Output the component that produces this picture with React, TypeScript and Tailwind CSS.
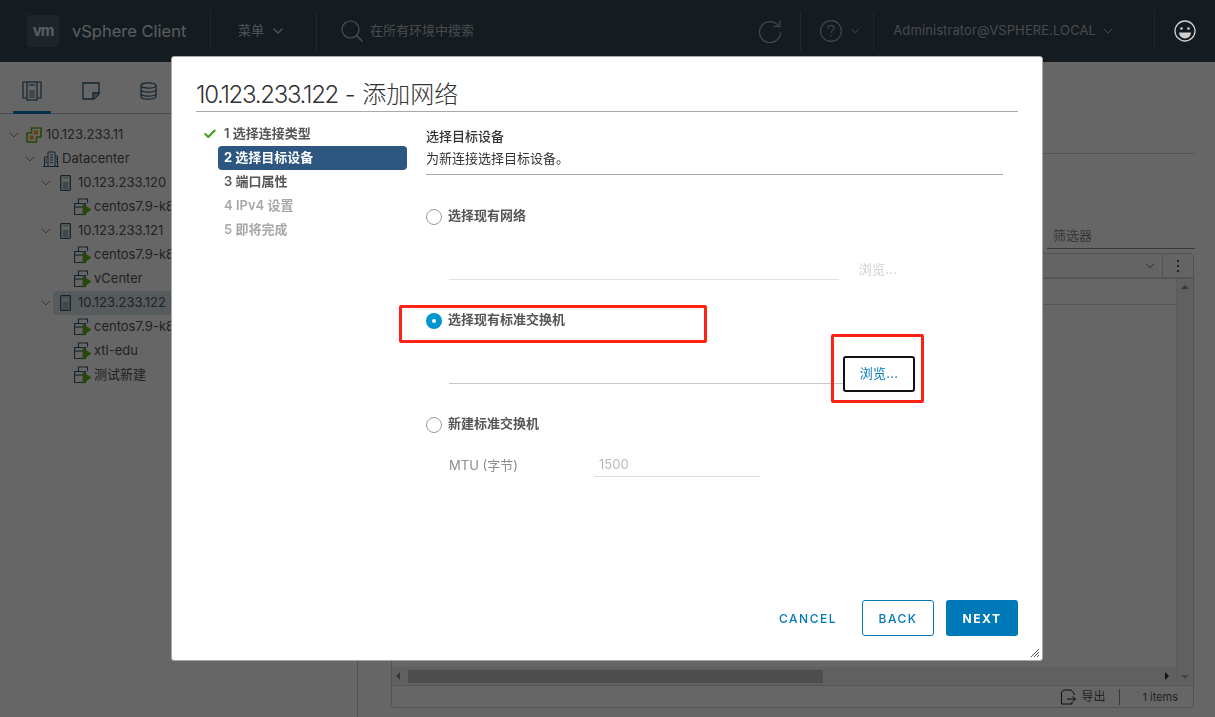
import { ChevronDown, Check } from 'lucide-react';

const cjk = '"Inter", "Noto Sans CJK SC", sans-serif';

const treeRows = [
  { label: '10.123.233.11', depth: 0, icon: 'cluster' },
  { label: 'Datacenter', depth: 1, icon: 'dc' },
  { label: '10.123.233.120', depth: 2, icon: 'host' },
  { label: 'centos7.9-k8s-master', depth: 3, icon: 'vm' },
  { label: '10.123.233.121', depth: 2, icon: 'host' },
  { label: 'centos7.9-k8s-node1', depth: 3, icon: 'vm' },
  { label: 'vCenter', depth: 3, icon: 'vm' },
  { label: '10.123.233.122', depth: 2, icon: 'host', selected: true },
  { label: 'centos7.9-k8s-node2', depth: 3, icon: 'vm' },
  { label: 'xtl-edu', depth: 3, icon: 'vm' },
  { label: '测试新建', depth: 3, icon: 'vm' },
];

function TreeIcon({ type }: { type: string }) {
  if (type === 'cluster') {
    return (
      <svg width="16" height="16" viewBox="0 0 16 16" fill="none">
        <path d="M5.500 1h9.500v9h-4.500v5H1V6h4.500z" stroke="#6fae1e" strokeWidth="1.600" />
        <rect x="8" y="3.500" width="4" height="4" fill="#f0a81c" />
        <rect x="3.500" y="8.500" width="4" height="4" fill="#f0a81c" />
      </svg>
    );
  }
  if (type === 'dc') {
    return (
      <svg width="16" height="16" viewBox="0 0 16 16" fill="none" stroke="#315a75" strokeWidth="1">
        <path d="M0 15.500h16M1.500 15.500V6H5M5 15.500V1h7v14.500M12 5h2.500v10.500" />
        <path d="M7 4h3M7 6.500h3M7 9h3M7 11.500h3M2.500 9h1.500M2.500 11.500h1.500M13 8h1M13 11h1" />
      </svg>
    );
  }
  if (type === 'host') {
    return (
      <svg width="11" height="16" viewBox="0 0 11 16" fill="none">
        <rect x="0.700" y="0.700" width="9.600" height="14.600" rx="0.500" stroke="#315a75" strokeWidth="1.300" />
        <rect x="2.500" y="6.500" width="6" height="7.500" fill="#a9b4ba" />
        <path d="M2.500 3h6" stroke="#a9b4ba" strokeWidth="1.200" />
      </svg>
    );
  }
  return (
    <svg width="18" height="18" viewBox="0 0 18 18" fill="none">
      <path d="M4.500 5V1h9v4" stroke="#315a75" strokeWidth="1.100" />
      <path d="M.500 5.500h11v11H.500z" stroke="#315a75" strokeWidth="1.100" />
      <path d="M.500 9h11" stroke="#315a75" strokeWidth="1.100" />
      <path d="M8.500 5.500l9 6-9 6.500z" fill="#6db01f" />
    </svg>
  );
}

function Radio({ checked }: { checked?: boolean }) {
  return checked ? (
    <span className="w-4 h-4 rounded-full bg-[#0095d3] flex items-center justify-center shrink-0">
      <span className="w-1 h-1 rounded-full bg-white" />
    </span>
  ) : (
    <span className="w-4 h-4 rounded-full border border-[#9a9a9a] bg-white shrink-0" />
  );
}

function Header() {
  return (
    <header className="h-[62px] bg-[#324655] flex items-center text-[#b9b9b9] shrink-0">
      <div className="w-8 h-8 ml-[27px] rounded-[3px] bg-[#4a5c6a] flex items-center justify-center font-bold text-[15px] tracking-[-1px] text-[#e6e6e6]">vm</div>
      <span className="ml-[13px] text-[16.500px] w-[138px] text-[#e6e6e6]">vSphere Client</span>
      <div className="w-px h-10 bg-[#4e6272]" />
      <span className="ml-[27px] text-[13px] flex items-center gap-[6px] text-[#d0d0d0]">
        菜单 <ChevronDown size={16} strokeWidth={2} />
      </span>
      <div className="ml-[30px] w-px h-10 bg-[#4e6272]" />
      <svg className="ml-6" width="22" height="22" viewBox="0 0 22 22" fill="none" stroke="#c9c9c9" strokeWidth="1.200">
        <circle cx="9.500" cy="9.500" r="8.500" />
        <path d="M15.500 15.500l6 6" />
      </svg>
      <span className="ml-[7px] text-[13px]">在所有环境中搜索</span>
      <div className="flex-1" />
      <svg width="24" height="24" viewBox="0 0 24 24" fill="none" stroke="#b0b0b0" strokeWidth="1.200">
        <path d="M20.500 7A10.500 10.500 0 1 0 22.500 13" />
        <path d="M22 1.500V7.500h-6.500" />
      </svg>
      <div className="ml-[18px] w-px h-10 bg-[#4e6272]" />
      <svg className="ml-[19px]" width="22" height="22" viewBox="0 0 22 22" fill="none" stroke="#b0b0b0" strokeWidth="1.100">
        <circle cx="11" cy="11" r="10.400" />
        <path d="M8 8.500c0-4 6-4 6-.500 0 2-3 2.500-3 5M11 15v1.500" />
      </svg>
      <ChevronDown className="ml-[6px]" size={14} strokeWidth={1.500} />
      <div className="ml-[11px] w-px h-10 bg-[#4e6272]" />
      <span className="ml-[19px] text-[13px] tracking-[0.100px]">Administrator@VSPHERE.LOCAL</span>
      <ChevronDown className="ml-1" size={16} strokeWidth={1.500} />
      <div className="ml-[38px] w-px h-10 bg-[#4e6272]" />
      <svg className="ml-[19px] mr-[19px] relative z-10" width="22" height="22" viewBox="0 0 22 22" fill="none" stroke="#cfcfcf" strokeWidth="1.300">
        <circle cx="11" cy="11" r="10" />
        <circle cx="7.500" cy="8.500" r="1.300" fill="#cfcfcf" stroke="none" />
        <circle cx="14.500" cy="8.500" r="1.300" fill="#cfcfcf" stroke="none" />
        <path d="M5 12.500h12a6 6 0 0 1-12 0z" fill="#cfcfcf" stroke="none" />
      </svg>
    </header>
  );
}

function Sidebar() {
  return (
    <aside className="w-[358px] shrink-0 border-r border-[#d0d0d0] bg-white overflow-hidden">
      <div className="h-[52px] border-b border-[#c0c0c0] flex items-end pl-[13px]">
        <div className="w-[38px] h-[52px] pt-2 border-b-[3px] border-[#0079b8] -mb-px flex items-center justify-center">
          <svg width="20" height="20" viewBox="0 0 20 20" fill="none" stroke="#315a75" strokeWidth="1.200">
            <path d="M4.500 1H1v16h3.500M15.500 1H19v16h-3.500" />
            <rect x="5" y="1" width="10" height="18" />
            <rect x="7" y="9" width="6" height="8" fill="#a9b4ba" stroke="none" />
            <path d="M7 4h6" />
          </svg>
        </div>
        <div className="w-[40px] ml-[20px] h-[52px] pt-2 flex items-center justify-center">
          <svg width="18" height="18" viewBox="0 0 18 18" fill="none" stroke="#315a75" strokeWidth="1.300">
            <path d="M1 1h16v11l-5 5H1z" />
            <path d="M17 11h-6v6" fill="#a9b4ba" />
          </svg>
        </div>
        <div className="w-[40px] ml-[17px] h-[52px] pt-2 flex items-center justify-center">
          <svg width="17" height="18" viewBox="0 0 17 18" fill="none" stroke="#315a75" strokeWidth="1.200">
            <ellipse cx="8.500" cy="3.500" rx="7.500" ry="2.700" />
            <path d="M1 3.500v11c0 3.500 15 3.500 15 0v-11M1 7.500c0 3.500 15 3.500 15 0M1 11.500c0 3.500 15 3.500 15 0" />
          </svg>
        </div>
      </div>
      <div className="pt-[9px]">
        {treeRows.map((row) => (
          <div key={row.label} className="h-6 flex items-center whitespace-nowrap">
            {row.depth === 3 ? (
              <div className="w-[74px] shrink-0" />
            ) : (
              <div
                className={
                  row.depth === 0 ? 'w-[26px] pl-[6px] shrink-0' : row.depth === 1 ? 'w-[43px] pl-[22px] shrink-0' : 'w-[53px] pl-[38px] shrink-0'
                }
              >
                <ChevronDown size={16} strokeWidth={1.500} className="text-[#8c8c8c]" />
              </div>
            )}
            <div className={row.selected ? 'flex items-center h-6 flex-1 bg-[#d8e3e9] rounded-l-[3px] pl-[7px]' : row.depth === 2 ? 'flex items-center pl-[7px]' : 'flex items-center'}>
              <TreeIcon type={row.icon} />
              <span className={row.depth === 0 ? 'ml-[4px] text-[13px] text-[#565656]' : row.depth === 1 ? 'ml-[3px] text-[13px] text-[#565656]' : row.depth === 2 ? 'ml-[7px] text-[13px] text-[#565656]' : 'ml-[2px] text-[13px] text-[#565656]'}>
                {row.label}
              </span>
            </div>
          </div>
        ))}
      </div>
    </aside>
  );
}

function MainPanel() {
  return (
    <main className="flex-1 bg-white flex flex-col pl-[33px] pr-[20px] min-w-0">
      <div className="h-[92px] border-b border-[#d0d0d0] shrink-0" />
      <div className="h-[95px] shrink-0 flex justify-end items-end">
        <div className="w-[148px] h-[28px] border-b border-[#8c8c8c] text-[13px] text-[#8c8c8c] pl-[6px] pt-[5px]">筛选器</div>
      </div>
      <div className="flex-1 mb-[9px] mt-[4px] mr-px border border-[#d0d0d0] rounded-[3px] flex flex-col min-h-0">
        <div className="h-[25px] bg-[#fafafa] border-b-2 border-[#d4d4d4] flex justify-end items-center shrink-0">
          <ChevronDown size={14} strokeWidth={1.500} className="text-[#565656] mr-[5px]" />
          <div className="w-[31px] h-full border-l border-[#d0d0d0] flex items-center justify-center">
            <svg width="4" height="14" viewBox="0 0 4 14" fill="#565656">
              <rect x="1" y="1" width="2" height="2" />
              <rect x="1" y="6" width="2" height="2" />
              <rect x="1" y="11" width="2" height="2" />
            </svg>
          </div>
        </div>
        <div className="flex-1 flex min-h-0">
          <div className="flex-1 flex flex-col min-w-0">
            <div className="h-[26px] border-b border-[#d4d4d4] shrink-0" />
            <div className="flex-1" />
            <div className="h-[18px] bg-[#f0f0f0] flex items-center shrink-0 pl-[4px]">
              <span className="w-0 h-0 border-y-[4px] border-y-transparent border-r-[4px] border-r-[#8c8c8c]" />
              <div className="ml-[8px] h-[13px] w-[415px] bg-[#c4c4c4]" />
              <div className="flex-1" />
              <span className="w-0 h-0 border-y-[4px] border-y-transparent border-l-[4px] border-l-[#333] mr-[7px]" />
            </div>
          </div>
          <div className="w-[17px] bg-[#f0f0f0] border-l border-[#e4e4e4] shrink-0 flex flex-col items-center justify-between py-[6px]">
            <span className="w-0 h-0 border-x-[4px] border-x-transparent border-b-[4px] border-b-[#8c8c8c]" />
            <span className="w-0 h-0 border-x-[4px] border-x-transparent border-t-[4px] border-t-[#a8a8a8]" />
          </div>
        </div>
        <div className="h-[22px] pt-px border-t border-[#d4d4d4] flex items-center justify-end text-[11px] text-[#565656] shrink-0">
          <svg width="16" height="16" viewBox="0 0 16 16" fill="none" stroke="#222" strokeWidth="1">
            <path d="M14 6V4l-3-3H4L1.500 3v12H12v-2" />
            <path d="M7 10h8.500M12.500 7.500l3 2.500-3 2.500" />
          </svg>
          <span className="ml-[5px] text-[12px]">导出</span>
          <div className="w-px h-[16px] bg-[#8c8c8c] ml-[14px] mr-[22px]" />
          <span className="mr-[15px]">1 items</span>
        </div>
      </div>
    </main>
  );
}

function WizardDialog() {
  return (
    <div className="fixed inset-0 bg-black/60">
      <div className="absolute left-[171px] top-[56px] w-[872px] h-[605px] bg-white rounded-[3px] border border-[#a8a8a8] flex flex-col text-[#333]">
        <div className="mx-[24px] h-[55px] border-b border-[#a8a8a8] shrink-0 flex items-end text-[24px] leading-[32px] text-[#333] font-light">
          <span className="whitespace-pre">
            <span className="tracking-[-1.300px]">10.123.233.122</span> - 添加网络
          </span>
        </div>
        <div className="flex flex-1 min-h-0">
          <nav className="w-[254px] shrink-0 pl-[31px] pt-[10px] text-[13px] font-semibold">
            <div className="h-6 flex items-center text-[#565656]">
              <Check size={14} strokeWidth={3.500} className="text-[#3c9e1c] shrink-0" />
              <span className="ml-[7px]">1 选择连接类型</span>
            </div>
            <div className="h-6 flex items-center ml-[15px] w-[189px] bg-[#2d5680] rounded-[4px] text-white pl-[6px] font-bold">2 选择目标设备</div>
            <div className="h-6 flex items-center ml-[15px] pl-[6px] text-[#565656]">3 端口属性</div>
            <div className="h-6 flex items-center ml-[15px] pl-[6px] text-[#a8a8a8]">4 IPv4 设置</div>
            <div className="h-6 flex items-center ml-[15px] pl-[6px] text-[#a8a8a8]">5 即将完成</div>
          </nav>
          <section className="flex-1 pr-[39px] text-[13px] min-w-0">
            <div className="pt-[14px] h-[63px] border-b border-[#a8a8a8]">
              <div className="h-[22px] leading-[20px] font-medium text-[#333]">选择目标设备</div>
              <div className="h-[20px] leading-[20px] text-[#333]">为新连接选择目标设备。</div>
            </div>
            <div className="mt-[32px] h-5 flex items-center gap-[6px] font-semibold text-[#565656]">
              <Radio />
              <span className="pb-[2px]">选择现有网络</span>
            </div>
            <div className="mt-[23px] ml-[23px] flex items-end">
              <div className="w-[390px] h-[30px] border-b border-[#e0e0e0]" />
              <div className="w-[80px] h-9 -ml-px -mb-[8px] flex items-center justify-center text-[#cfcfcf] tracking-[0.300px]">浏览...</div>
            </div>
            <div className="relative mt-[31px] h-5 flex items-center gap-[6px] font-semibold text-[#565656]">
              <Radio checked />
              <span className="pb-[2px]">选择现有标准交换机</span>
              <div className="absolute left-[-27px] top-[-6px] w-[308px] h-[38px] border-[3px] border-[#fe2114] rounded-[2px]" />
            </div>
            <div className="relative mt-[25px] ml-[23px] flex items-end">
              <div className="w-[394px] h-[28px] border-b border-[#c8c8c8]" />
              <div className="w-[72px] h-9 -mb-[8px] flex items-center justify-center text-[#0079b8] border-2 border-[#111] rounded-[3px] tracking-[0.300px]">浏览...</div>
              <div className="absolute left-[382px] top-[-22px] w-[93px] h-[69px] border-[3px] border-[#fe2114] rounded-[2px]" />
            </div>
            <div className="mt-[31px] h-5 flex items-center gap-[6px] font-semibold text-[#565656]">
              <Radio />
              <span className="pb-[2px]">新建标准交换机</span>
            </div>
            <div className="mt-[18px] ml-[23px] flex items-end text-[#8c8c8c]">
              <span className="w-[145px] h-6 pt-px flex items-center">MTU (字节)</span>
              <span className="w-[166px] h-6 pt-px flex items-center border-b border-[#e0e0e0] text-[#b8b8b8] pl-[5px]">1500</span>
            </div>
          </section>
        </div>
        <footer className="relative h-[60px] shrink-0 flex justify-end items-start pr-[24px] text-[12px] tracking-[1.500px] font-medium">
          <button className="h-9 pt-px px-[18px] text-[#0079b8]">CANCEL</button>
          <button className="ml-[7px] h-9 pt-px w-[72px] border border-[#0079b8] rounded-[3px] text-[#0079b8]">BACK</button>
          <button className="ml-[12px] h-9 pt-px w-[72px] bg-[#0079b8] rounded-[3px] text-white font-bold">NEXT</button>
          <svg className="absolute right-[3px] bottom-[3px]" width="9" height="9" viewBox="0 0 9 9" stroke="#555" strokeWidth="1">
            <path d="M1 9l8-8M4 9l5-5M7 9l2-2" />
          </svg>
        </footer>
      </div>
    </div>
  );
}

export default function App() {
  return (
    <div className="h-[717px] w-[1215px] overflow-hidden flex flex-col bg-white" style={{ fontFamily: cjk }}>
      <Header />
      <div className="flex flex-1 min-h-0">
        <Sidebar />
        <MainPanel />
      </div>
      <WizardDialog />
    </div>
  );
}
